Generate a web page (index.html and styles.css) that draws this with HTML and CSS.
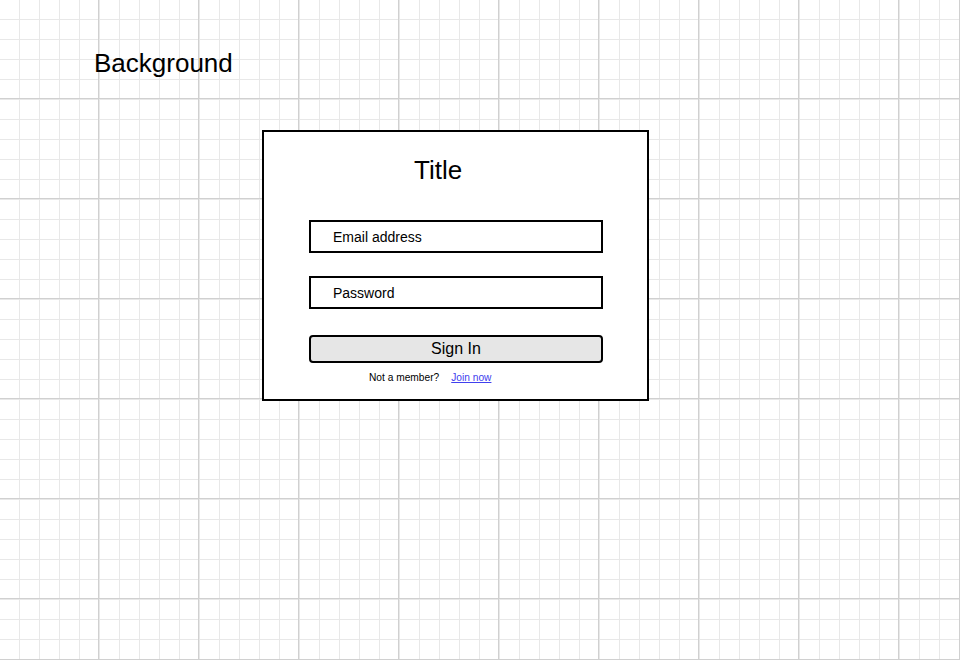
FILE: index.html
```html
<!DOCTYPE html>
<html lang="en">
<head>
<meta charset="utf-8">
<title>Sign In</title>
<link rel="stylesheet" href="styles.css">
</head>
<body>
<div class="canvas">
  <div class="bg-label">Background</div>
  <div class="card">
    <div class="title">Title</div>
    <div class="form">
      <div class="field">Email address</div>
      <div class="field field-gap">Password</div>
      <div class="button">Sign In</div>
      <div class="footer">
        <span class="note">Not a member?</span>
        <a class="join" href="#">Join now</a>
      </div>
    </div>
  </div>
</div>
</body>
</html>
```

FILE: styles.css
```css
html, body {
  margin: 0;
  padding: 0;
}

body {
  font-family: "Liberation Sans", Arial, sans-serif;
  color: #000;
  background: #fff;
}

.canvas {
  box-sizing: border-box;
  width: 960px;
  height: 660px;
  overflow: hidden;
  padding-top: 48px;
  border-right: 1px solid #d0d0d0;
  border-bottom: 1px solid #d0d0d0;
  background-color: #fff;
  background-image:
    linear-gradient(to right, #d0d0d0 1px, transparent 1px),
    linear-gradient(to bottom, #d0d0d0 1px, transparent 1px),
    linear-gradient(to right, #e8e8e8 1px, transparent 1px),
    linear-gradient(to bottom, #e8e8e8 1px, transparent 1px);
  background-size: 100px 100px, 100px 100px, 20px 20px, 20px 20px;
  background-position: 98px 0, 0 98px, 19px 0, 0 19px;
}

.bg-label {
  font-size: 26px;
  line-height: 30px;
  padding-left: 94px;
}

.card {
  box-sizing: border-box;
  width: 387px;
  height: 271px;
  margin-top: 52px;
  margin-left: 262px;
  border: 2px solid #000;
  background: #fff;
  padding-top: 23px;
}

.title {
  font-size: 26px;
  line-height: 30px;
  padding-left: 150px;
}

.form {
  display: flex;
  flex-direction: column;
  width: 294px;
  margin-top: 35px;
  margin-left: 45px;
}

.field {
  box-sizing: border-box;
  height: 33px;
  border: 2px solid #000;
  display: flex;
  align-items: center;
  padding-left: 22px;
  font-size: 14px;
  line-height: 16px;
  background: #fff;
}

.field-gap {
  margin-top: 23px;
}

.button {
  box-sizing: border-box;
  height: 28px;
  margin-top: 26px;
  border: 2px solid #000;
  border-radius: 4px;
  background: #e6e6e6;
  display: flex;
  align-items: center;
  justify-content: center;
  font-size: 16px;
  line-height: 18px;
}

.footer {
  display: flex;
  gap: 12px;
  margin-top: 9px;
  padding-left: 60px;
  font-size: 10.2px;
  line-height: 12px;
}

.join {
  color: #4040ee;
  text-decoration: underline;
}
```
